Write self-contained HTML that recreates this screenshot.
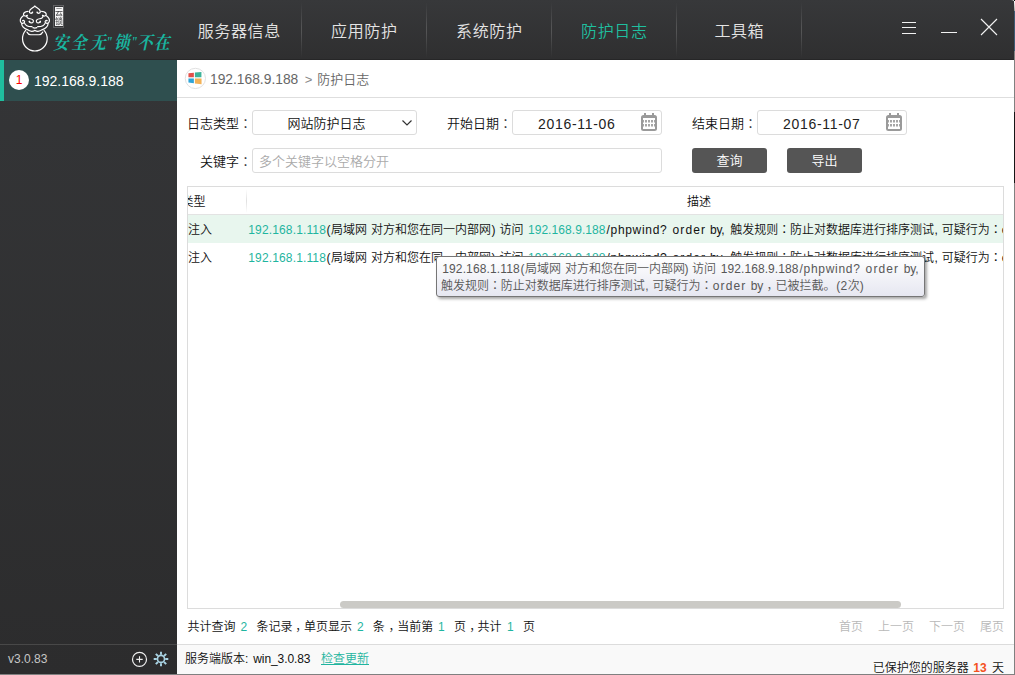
<!DOCTYPE html>
<html lang="zh-CN">
<head>
<meta charset="utf-8">
<title>云锁 - 防护日志</title>
<style>
*{box-sizing:border-box;margin:0;padding:0}
html,body{width:1015px;height:675px;overflow:hidden;background:#fff}
body{font-weight:350;font-family:"Liberation Sans","Noto Sans CJK SC",sans-serif;font-size:13px;color:#222;position:relative}
.abs{position:absolute;white-space:nowrap}
#win{position:absolute;left:0;top:0;width:1015px;height:675px;overflow:hidden;background:#fff}
/* header */
#hdr{position:absolute;left:0;top:0;width:1015px;height:60px;background:linear-gradient(#37383a,#2f2f30);border-bottom:1px solid #262627;border-top-right-radius:4px}
.nav{position:absolute;top:0;height:60px;width:125px;text-align:center;line-height:63px;font-size:16px;color:#e4e4e4;letter-spacing:.6px;padding-left:1.6px}
.nav.on{color:#1fbf9f}
.sep{position:absolute;top:2px;width:1px;height:56px;background:linear-gradient(rgba(255,255,255,0),rgba(255,255,255,.16) 45%,rgba(255,255,255,.16) 55%,rgba(255,255,255,0))}
/* sidebar */
#side{position:absolute;left:0;top:60px;width:177px;height:615px;background:linear-gradient(#343537,#2c2c2d)}
#sitem{position:absolute;left:0;top:0;width:177px;height:41px;background:#2f4f4f;border-left:4px solid #1fbf9f}
/* content */
.lbl{font-size:13px;color:#111}
.box{position:absolute;border:1px solid #dcdcdc;border-radius:3px;background:#fff}
.btn{position:absolute;height:25px;width:75px;background:#555;border-radius:3px;color:#fff;text-align:center;line-height:26px;font-size:13px}
.teal{color:#1fb5a0}

.date{font-size:14px;line-height:20px;color:#222;letter-spacing:.7px}
#tbl{position:absolute;left:187px;top:186px;width:817px;height:423px;border:1px solid #dcdcdc;overflow:hidden;background:#fff}
.th{font-size:12px;line-height:20px;color:#111}
.td{font-size:12px;line-height:20px;color:#111}
#tip{position:absolute;left:436px;top:256px;width:489px;height:41px;border:1px solid #767676;border-radius:3px;background:linear-gradient(#fff,#e6e7f1);box-shadow:2px 2px 3px rgba(0,0,0,.35);font-size:12px;line-height:16px;color:#575757;padding:3px 0 0 5px;white-space:nowrap}
.pg{font-size:12px;line-height:18px;color:#b8b8b8}
#edgeR{position:absolute;left:1013.5px;top:0;width:1.5px;height:675px;background:linear-gradient(#000 0,#000 1px,#fff 1px,#999 11px,#3d5a73 11px,#3d5a73 51px,#808080 51px,#808080 112px,#161616 112px,#161616 183px,#808080 183px)}
#edgeB{position:absolute;left:0;top:673.8px;width:1015px;height:1.2px;background:#808080}
.row span{position:absolute;top:0;white-space:pre}
.c{font-family:"Liberation Sans","Noto Sans CJK JP",sans-serif}
</style>
</head>
<body>
<div id="win">

<!-- HEADER -->
<div id="hdr">

  <!-- logo -->
  <svg class="abs" style="left:16px;top:2px;overflow:visible" width="38" height="58" viewBox="0 0 675 1030" fill="none" stroke="#fff" stroke-width="21" stroke-linecap="round" stroke-linejoin="round">
    <path d="M335,72 C300,110 245,120 238,165 C234,200 280,215 295,180"/>
    <path d="M335,72 C370,110 425,120 432,165 C436,200 390,215 375,180"/>
    <path d="M215,165 C170,170 130,195 133,225 C136,255 180,255 200,238"/>
    <path d="M455,165 C500,170 540,195 537,225 C534,255 490,255 470,238"/>
    <path d="M185,240 C190,275 215,295 250,297 C295,300 320,330 305,355 C290,380 240,375 235,345"/>
    <path d="M485,240 C480,275 455,295 420,297 C375,300 350,330 365,355 C380,380 430,375 435,345"/>
    <path d="M130,245 C95,270 70,310 78,345 C86,385 135,390 150,360 C160,340 140,320 120,330"/>
    <path d="M540,245 C575,270 600,310 592,345 C584,385 535,390 520,360 C510,340 530,320 550,330"/>
    <path d="M150,370 C165,415 210,440 285,438"/>
    <path d="M520,370 C505,415 460,440 385,438"/>
    <path d="M300,455 Q335,470 370,455"/>
    <path d="M100,385 C105,440 150,470 200,490 C240,520 290,530 335,505"/>
    <path d="M570,385 C565,440 520,470 470,490 C430,520 380,530 335,505"/>
    <path d="M195,535 C215,570 230,582 260,582 L410,582 C440,582 455,570 475,535"/>
    <path d="M172,505 A219,219 0 1,0 498,505" stroke-width="21"/>
    <g fill="#fff" stroke="none"><circle cx="290" cy="186" r="15"/><circle cx="380" cy="186" r="15"/><circle cx="196" cy="240" r="13"/><circle cx="474" cy="240" r="13"/><circle cx="240" cy="350" r="15"/><circle cx="430" cy="350" r="15"/><circle cx="124" cy="332" r="13"/><circle cx="546" cy="332" r="13"/></g>
  </svg>
  <div class="abs" style="left:53px;top:5px;width:11px;height:23px;border:1px solid rgba(255,255,255,.22)"></div>
  <div class="abs" style="left:55px;top:7px;width:8px;height:19px;background:#f6f6f6;color:#3a3a3c;font-size:8px;line-height:9px;text-align:center;font-weight:400;padding-top:1px;will-change:transform">云<br>锁</div>
  <div class="abs" id="slogan" style="left:52px;top:32px;width:122px;height:22px;line-height:22px;color:#19b5a0;font-style:italic;font-weight:700;font-family:'Liberation Serif','Noto Serif CJK SC',serif"><span style="position:absolute;left:0.5px;top:0;font-size:18px;transform:scaleX(.87);transform-origin:0 50%">安</span><span style="position:absolute;left:18.5px;top:0;font-size:18px;transform:scaleX(.87);transform-origin:0 50%">全</span><span style="position:absolute;left:37.5px;top:0;font-size:18px;transform:scaleX(.87);transform-origin:0 50%">无</span><span style="position:absolute;left:54px;top:0;font-size:14px;transform:scaleX(.87);transform-origin:0 50%">&quot;</span><span style="position:absolute;left:61.5px;top:0;font-size:18px;transform:scaleX(.87);transform-origin:0 50%">锁</span><span style="position:absolute;left:79px;top:0;font-size:14px;transform:scaleX(.87);transform-origin:0 50%">&quot;</span><span style="position:absolute;left:85px;top:0;font-size:18px;transform:scaleX(.87);transform-origin:0 50%">不</span><span style="position:absolute;left:101.5px;top:0;font-size:18px;transform:scaleX(.87);transform-origin:0 50%">在</span></div>
  <!-- window buttons -->
  <div class="abs" style="left:902px;top:22px;width:14px;height:1px;background:#f2f2f2"></div>
  <div class="abs" style="left:902px;top:27px;width:14px;height:1px;background:#f2f2f2"></div>
  <div class="abs" style="left:902px;top:33px;width:14px;height:1px;background:#f2f2f2"></div>
  <div class="abs" style="left:941px;top:32px;width:16px;height:1px;background:#f2f2f2"></div>
  <svg class="abs" style="left:980px;top:18px" width="18" height="18" viewBox="0 0 18 18" stroke="#f2f2f2" stroke-width="1.1" fill="none"><path d="M1,1 L17,17 M17,1 L1,17"/></svg>
  <div class="nav" style="left:176px">服务器信息</div>
  <div class="nav" style="left:301px">应用防护</div>
  <div class="nav" style="left:426px">系统防护</div>
  <div class="nav on" style="left:551px">防护日志</div>
  <div class="nav" style="left:676px">工具箱</div>
  <div class="sep" style="left:301px"></div>
  <div class="sep" style="left:426px"></div>
  <div class="sep" style="left:551px"></div>
  <div class="sep" style="left:676px"></div>
  <div class="sep" style="left:801px"></div>
</div>

<!-- SIDEBAR -->
<div id="side">
  <div id="sitem">
    <div class="abs" style="left:5px;top:10px;width:20px;height:20px;border-radius:50%;background:#fff;color:#f00;font-size:12px;line-height:20px;text-align:center">1</div>
    <div class="abs" style="left:30px;top:11px;font-size:14px;line-height:20px;color:#fff">192.168.9.188</div>
  </div>
  <div class="abs" style="left:0;top:584px;width:177px;height:1px;background:#484848"></div>
  <div class="abs" style="left:8px;top:591px;font-size:12px;line-height:16px;color:#c6c6c6">v3.0.83</div>
  <svg class="abs" style="left:131px;top:591px" width="17" height="17" viewBox="0 0 17 17" fill="none" stroke="#f0f0f0"><circle cx="8.5" cy="8.4" r="7" stroke-width="1.2"/><path d="M5.3,8.4 H11.7 M8.5,5.2 V11.6" stroke-width="1.1"/></svg>
  <svg class="abs" style="left:153px;top:591px" width="16" height="16" viewBox="-8 -8 16 16" fill="none" stroke="#a9d3e3"><circle cx="0" cy="-0.1" r="3.5" stroke-width="1.6"/><g stroke-width="1.9"><path d="M0,-4.2 V-7.3 M0,4.2 V7.3 M-4.2,0 H-7.3 M4.2,0 H7.3"/><path d="M3,-3 L5.2,-5.2 M-3,-3 L-5.2,-5.2 M3,3 L5.2,5.2 M-3,3 L-5.2,5.2"/></g></svg>
</div>

<!-- CONTENT -->
<div id="content">
  <!-- breadcrumb -->
  <svg class="abs" style="left:180px;top:64px" width="30" height="30" viewBox="0 0 675 675"><circle cx="346" cy="325" r="228" fill="#fff" stroke="#dcdcdc" stroke-width="20"/><polygon points="190,207 312,195 312,300 190,300" fill="#e2504a"/><polygon points="335,192 482,178 482,300 335,300" fill="#3eb39a"/><polygon points="190,325 312,325 312,435 190,418" fill="#2ea4d8"/><polygon points="335,325 485,325 485,455 335,437" fill="#f3b257"/></svg>
  <div class="abs" style="left:210px;top:70px;font-size:13.8px;line-height:20px;color:#666">192.168.9.188<span style="margin:0 5px 0 6.5px;color:#888;font-size:13px">&gt;</span><span style="font-size:13px">防护日志</span></div>
  <div class="abs" style="left:177px;top:97px;width:837px;height:1px;background:#dedede"></div>

  <!-- filters row 1 -->
  <div class="abs lbl" style="left:187px;top:114px;line-height:20px">日志类型<span class="c" lang="ja">：</span></div>
  <div class="box" style="left:252px;top:110px;width:165px;height:25px"></div>
  <div class="abs" style="left:252px;top:114px;width:149px;text-align:center;font-size:13px;line-height:20px;color:#111">网站防护日志</div>
  <svg class="abs" style="left:401px;top:119px" width="12" height="8" viewBox="0 0 12 8" fill="none" stroke="#333" stroke-width="1.2"><path d="M1.5,1.5 L6,6 L10.5,1.5"/></svg>

  <div class="abs lbl" style="left:447px;top:114px;line-height:20px">开始日期<span class="c" lang="ja">：</span></div>
  <div class="box" style="left:512px;top:110px;width:150px;height:25px"></div>
  <div class="abs date" style="left:538px;top:114px">2016-11-06</div>
  <svg class="abs cal" style="left:641px;top:113px" width="16" height="18" viewBox="0 0 16 18"><use href="#calico"/></svg>

  <div class="abs lbl" style="left:692px;top:114px;line-height:20px">结束日期<span class="c" lang="ja">：</span></div>
  <div class="box" style="left:757px;top:110px;width:150px;height:25px"></div>
  <div class="abs date" style="left:783px;top:114px">2016-11-07</div>
  <svg class="abs cal" style="left:886px;top:113px" width="16" height="18" viewBox="0 0 16 18"><use href="#calico"/></svg>

  <!-- filters row 2 -->
  <div class="abs lbl" style="left:200px;top:152px;line-height:20px">关键字<span class="c" lang="ja">：</span></div>
  <div class="box" style="left:252px;top:148px;width:410px;height:25px"></div>
  <div class="abs" style="left:259px;top:152px;font-size:13px;line-height:20px;color:#aaa">多个关键字以空格分开</div>
  <div class="btn" style="left:692px;top:148px">查询</div>
  <div class="btn" style="left:787px;top:148px">导出</div>

  <!-- table -->
  <div id="tbl">
    <div class="abs" style="left:0;top:0;width:815px;height:28px;background:#fff;border-bottom:1px solid #e3e3e3"></div>
    <div class="abs" style="left:0;top:28px;width:815px;height:28px;background:#e8f6ee"></div>
    <div class="abs" style="left:58px;top:2px;width:1px;height:24px;background:linear-gradient(rgba(0,0,0,0),rgba(0,0,0,.12) 50%,rgba(0,0,0,0))"></div>
    <div class="abs th" style="left:-6.5px;top:5px">类型</div>
    <div class="abs th" style="left:499px;top:5px">描述</div>
    <div class="abs td" style="left:-24px;top:33px">SQL注入</div>
    <div class="abs td" style="left:-24px;top:61px">SQL注入</div>
    <div class="abs td row" style="left:0;top:33px;width:1400px;height:20px"><span class="teal" style="left:60.3px;letter-spacing:0.14px">192.168.1.118</span><span style="left:138.5px">(</span><span style="left:143.0px">局域网</span><span style="left:183.1px">对方和您在同一内部网</span><span style="left:303.5px">)</span><span style="left:311.5px">访问</span><span class="teal" style="left:339.9px;letter-spacing:0.07px">192.168.9.188</span><span style="left:418.5px;letter-spacing:0.69px">/phpwind?</span><span style="left:484.5px;letter-spacing:1.12px">order</span><span style="left:521.9px;letter-spacing:-0.17px">by,</span><span style="left:542.3px">触发规则</span><span class="c" lang="ja" style="left:590.3px">：</span><span style="left:602.0px">防止对数据库进行排序测试</span><span style="left:746.5px">,</span><span style="left:753.8px">可疑行为</span><span class="c" lang="ja" style="left:801.8px">：</span><span style="left:813.8px;letter-spacing:1.12px">order</span><span style="left:851.9px;letter-spacing:-0.14px">by</span><span style="left:864.8px">，</span><span style="left:876.8px">已被拦截。</span><span style="left:937.5px;letter-spacing:0.26px">(2</span><span style="left:948.9px">次)</span></div>
    <div class="abs td row" style="left:0;top:61px;width:1400px;height:20px"><span class="teal" style="left:60.3px;letter-spacing:0.14px">192.168.1.118</span><span style="left:138.5px">(</span><span style="left:143.0px">局域网</span><span style="left:183.1px">对方和您在同一内部网</span><span style="left:303.5px">)</span><span style="left:311.5px">访问</span><span class="teal" style="left:339.9px;letter-spacing:0.07px">192.168.9.188</span><span style="left:418.5px;letter-spacing:0.69px">/phpwind?</span><span style="left:484.5px;letter-spacing:1.12px">order</span><span style="left:521.9px;letter-spacing:-0.17px">by,</span><span style="left:542.3px">触发规则</span><span class="c" lang="ja" style="left:590.3px">：</span><span style="left:602.0px">防止对数据库进行排序测试</span><span style="left:746.5px">,</span><span style="left:753.8px">可疑行为</span><span class="c" lang="ja" style="left:801.8px">：</span><span style="left:813.8px;letter-spacing:1.12px">order</span><span style="left:851.9px;letter-spacing:-0.14px">by</span><span style="left:864.8px">，</span><span style="left:876.8px">已被拦截。</span><span style="left:937.5px;letter-spacing:0.26px">(2</span><span style="left:948.9px">次)</span></div>
    <div class="abs" style="left:152px;top:414px;width:561px;height:7px;border-radius:4px;background:#cbcac6"></div>
  </div>

  <!-- tooltip -->
  <div id="tip"><div class="row" style="position:absolute;left:.5px;top:4px;height:16px;width:480px"><span style="left:4.7px;letter-spacing:0.14px">192.168.1.118</span><span style="left:82.9px">(</span><span style="left:87.4px">局域网</span><span style="left:127.5px">对方和您在同一内部网</span><span style="left:247.1px">)</span><span style="left:254.6px">访问</span><span style="left:283.3px;letter-spacing:0.07px">192.168.9.188</span><span style="left:362.1px;letter-spacing:0.69px">/phpwind?</span><span style="left:428.1px;letter-spacing:1.12px">order</span><span style="left:466.3px;letter-spacing:-0.17px">by,</span></div><div class="row" style="position:absolute;left:.5px;top:21px;height:16px;width:480px"><span style="left:3.6px">触发规则</span><span class="c" lang="ja" style="left:51.6px">：</span><span style="left:63.3px">防止对数据库进行排序测试</span><span style="left:207.8px">,</span><span style="left:215.1px">可疑行为</span><span class="c" lang="ja" style="left:263.1px">：</span><span style="left:275.3px;letter-spacing:1.12px">order</span><span style="left:313.2px;letter-spacing:-0.14px">by</span><span style="left:329.1px">，</span><span style="left:338.1px">已被拦截。</span><span style="left:398.8px;letter-spacing:0.26px">(2</span><span style="left:410.2px">次)</span></div></div>

  <!-- pagination -->
  <div class="abs row" style="left:187px;top:618px;width:360px;height:18px;font-size:12px;line-height:18px;color:#111"><span style="left:0.5px">共计查询</span><span class="teal" style="left:53.4px">2</span><span style="left:69.5px">条记录</span><span style="left:108.3px">，</span><span style="left:117.0px">单页显示</span><span class="teal" style="left:170.0px">2</span><span style="left:185.8px">条</span><span style="left:201.6px">，</span><span style="left:210.2px">当前第</span><span class="teal" style="left:251.0px">1</span><span style="left:267.0px">页</span><span style="left:282.3px">，</span><span style="left:290.6px">共计</span><span class="teal" style="left:320.0px">1</span><span style="left:336.0px">页</span></div>
  <div class="abs pg" style="left:839px;top:618px">首页</div>
  <div class="abs pg" style="left:878px;top:618px">上一页</div>
  <div class="abs pg" style="left:929px;top:618px">下一页</div>
  <div class="abs pg" style="left:980px;top:618px">尾页</div>

  <!-- footer -->
  <div class="abs" style="left:177px;top:644px;width:837px;height:30px;background:#f9f9f9;border-top:1px solid #dcdcdc"></div>
  <div class="abs row" style="left:185px;top:650px;width:200px;height:18px;font-size:12px;line-height:18px;color:#111"><span style="left:0">服务端版本:</span><span style="left:68.3px;letter-spacing:-.09px">win_3.0.83</span><span class="teal" style="left:136px;text-decoration:underline;text-underline-offset:1px">检查更新</span></div>
  <div class="abs row" style="left:872px;top:659px;width:140px;height:16px;font-size:12px;line-height:18px;color:#111"><span style="left:.7px">已保护您的服务器</span><span style="left:101.3px;color:#f4511e;font-weight:bold">13</span><span style="left:119.9px">天</span></div>
</div>
<svg width="0" height="0" style="position:absolute"><defs><g id="calico">
  <rect x="3" y="0" width="2" height="3" fill="#9a9a9a"/><rect x="11" y="0" width="2" height="3" fill="#9a9a9a"/>
  <rect x="0" y="2" width="16" height="16" rx="2.5" fill="#9a9a9a"/>
  <rect x="2" y="5" width="12" height="11" fill="#fff"/>
  <g fill="#a6a6a6"><rect x="2" y="7" width="1" height="2.5"/><rect x="4" y="7" width="2" height="2.5"/><rect x="7" y="7" width="2" height="2.5"/><rect x="10" y="7" width="2" height="2.5"/><rect x="13" y="7" width="1" height="2.5"/>
  <rect x="2" y="11" width="1" height="2.5"/><rect x="4" y="11" width="2" height="2.5"/><rect x="7" y="11" width="2" height="2.5"/><rect x="10" y="11" width="2" height="2.5"/><rect x="13" y="11" width="1" height="2.5"/></g>
</g></defs></svg>

<div id="edgeR"></div><div id="edgeB"></div>
</div>
</body>
</html>
